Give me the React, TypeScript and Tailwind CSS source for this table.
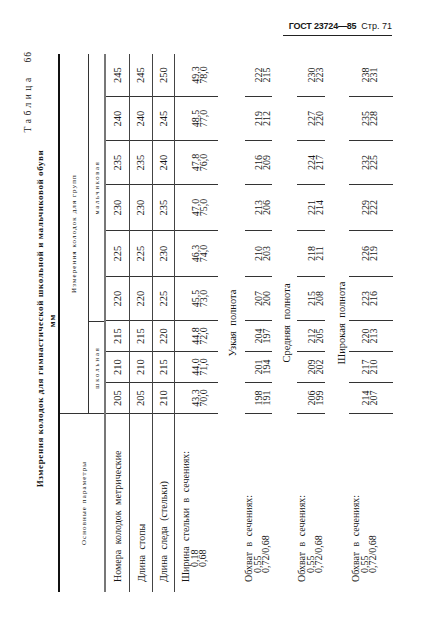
import React from "react";

const cols = "grid grid-cols-[178px_31px_31px_31px_44px_46px_46px_44px_44px_43px]";

const nomera = ["205", "210", "215", "220", "225", "230", "235", "240", "245"];
const sled = ["210", "215", "220", "225", "230", "235", "240", "245", "250"];
const shirina = [
  ["43,3", "70,0"], ["44,0", "71,0"], ["44,8", "72,0"], ["45,5", "73,0"], ["46,3", "74,0"],
  ["47,0", "75,0"], ["47,8", "76,0"], ["48,5", "77,0"], ["49,3", "78,0"],
];
const uzkaya = [
  ["198", "191"], ["201", "194"], ["204", "197"], ["207", "200"], ["210", "203"],
  ["213", "206"], ["216", "209"], ["219", "212"], ["222", "215"],
];
const srednyaya = [
  ["206", "199"], ["209", "202"], ["212", "205"], ["215", "208"], ["218", "211"],
  ["221", "214"], ["224", "217"], ["227", "220"], ["230", "223"],
];
const shirokaya = [
  ["214", "207"], ["217", "210"], ["220", "213"], ["223", "216"], ["226", "219"],
  ["229", "222"], ["232", "225"], ["235", "228"], ["238", "231"],
];

export default function App() {
  return (
    <div className="h-[623px] w-[427px] overflow-hidden bg-white font-['Liberation_Serif','Times_New_Roman',serif] text-[#161616]">
      {/* колонтитул */}
      <div className="flex h-[45px] justify-end pr-[35px] pt-[20px]">
        <div className="h-[16px] border-b-[1.5px] border-[#222] pl-[6px] font-['Liberation_Sans',Arial,sans-serif] text-[9px] leading-[13px]">
          <span className="font-bold tracking-[-0.2px]">ГОСТ 23724—85</span>
          <span className="ml-[5px]">Стр. 71</span>
        </div>
      </div>

      {/* таблица повёрнута на 90° */}
      <div className="ml-[15px] h-[555px] w-[385px]">
        <div className="h-[385px] w-[555px] origin-top-left [transform:translateY(555px)_rotate(-90deg)]">
          <div className="pt-[7px]">
            <div className="h-[12px] pr-[6px] text-right text-[9.5px] leading-[12px] tracking-[3.5px]">
              Таблица <span className="ml-[6px] tracking-[1px]">66</span>
            </div>
            <div className="h-[12px] pl-[8px] text-center text-[9px] font-bold leading-[12px] tracking-[0.6px]">
              Измерения колодок для гимнастической школьной и мальчиковой обуви
            </div>
            <div className="h-[12px] pl-[4px] text-center text-[8.5px] font-bold leading-[12px] tracking-[1px]">мм</div>
          </div>

          <div className="ml-[8px] w-[538px] text-[10px]">
            {/* шапка */}
            <div className={`${cols} h-[48px] grid-rows-[29px_15px] border-t-2 border-b-2 border-t-[#111] border-b-[#777] text-[7px] tracking-[1.1px]`}>
              <div className="row-span-2 flex items-center justify-center pt-[4px]">Основные параметры</div>
              <div className="col-span-9 flex items-center justify-center border-b border-l border-[#333]">
                Измерения колодок для групп
              </div>
              <div className="col-span-3 flex items-center justify-center border-l border-r border-[#333] text-[6.5px] tracking-[2px]">
                школьная
              </div>
              <div className="col-span-6 flex items-center justify-center text-[6.5px] tracking-[1.8px]">мальчиковая</div>
            </div>

            <SimpleRow label="Номера колодок метрические" values={nomera} h="h-[24px]" />
            <SimpleRow label="Длина стопы" values={nomera} h="h-[23px]" />
            <SimpleRow label="Длина следа (стельки)" values={sled} h="h-[22px]" />

            <div className={`${cols} h-[43px]`}>
              <div className="pl-[10px] pt-[7px] leading-[8.5px] [word-spacing:3px]">
                <div>Ширина стельки в сечениях:</div>
                <div className="pl-[15px]">0,18</div>
                <div className="pl-[15px]">0,68</div>
              </div>
              {shirina.map((v, i) => (
                <div key={i} className="border-l border-[#333] pt-[17px] text-center leading-[7.5px]">
                  <div>{v[0]}</div>
                  <div>{v[1]}</div>
                </div>
              ))}
            </div>

            <SectionTitle title="Узкая полнота" h="h-[27px]" pt="pt-[9px]" />
            <ObhvatBlock values={uzkaya} h="h-[27px]" pt="pt-[0px]" />
            <SectionTitle title="Средняя полнота" h="h-[25px]" pt="pt-[9px]" />
            <ObhvatBlock values={srednyaya} h="h-[28px]" pt="pt-[1px]" />
            <SectionTitle title="Широкая полнота" h="h-[24px]" pt="pt-[11px]" />
            <ObhvatBlock values={shirokaya} h="h-[44px]" pt="pt-[3px]" />
          </div>
        </div>
      </div>
    </div>
  );
}

function SimpleRow({ label, values, h }: { label: string; values: string[]; h: string }) {
  return (
    <div className={`${cols} ${h} border-b border-[#444]`}>
      <div className="flex items-center pl-[10px] [word-spacing:3px]">{label}</div>
      {values.map((v, i) => (
        <div key={i} className="flex items-center justify-center border-l border-[#333] text-[10.5px]">
          {v}
        </div>
      ))}
    </div>
  );
}

function SectionTitle({ title, h, pt }: { title: string; h: string; pt: string }) {
  return (
    <div className={`${h} ${pt} text-center text-[10.5px] leading-[12px] [word-spacing:3px]`}>{title}</div>
  );
}

function ObhvatBlock({ values, h, pt }: { values: string[][]; h: string; pt: string }) {
  return (
    <div className={`${cols} ${h}`}>
      <div className={`${pt} pl-[10px] leading-[8.5px] [word-spacing:3px]`}>
        <div>Обхват в сечениях:</div>
        <div className="pl-[9px]">0,55</div>
        <div className="pl-[9px]">0,72/0,68</div>
      </div>
      {values.map((v, i) => (
        <div key={i} className={`${pt} border-l border-[#333] text-center leading-[8.5px]`}>
          <div className="pt-[9.5px]">{v[0]}</div>
          <div>{v[1]}</div>
        </div>
      ))}
    </div>
  );
}
